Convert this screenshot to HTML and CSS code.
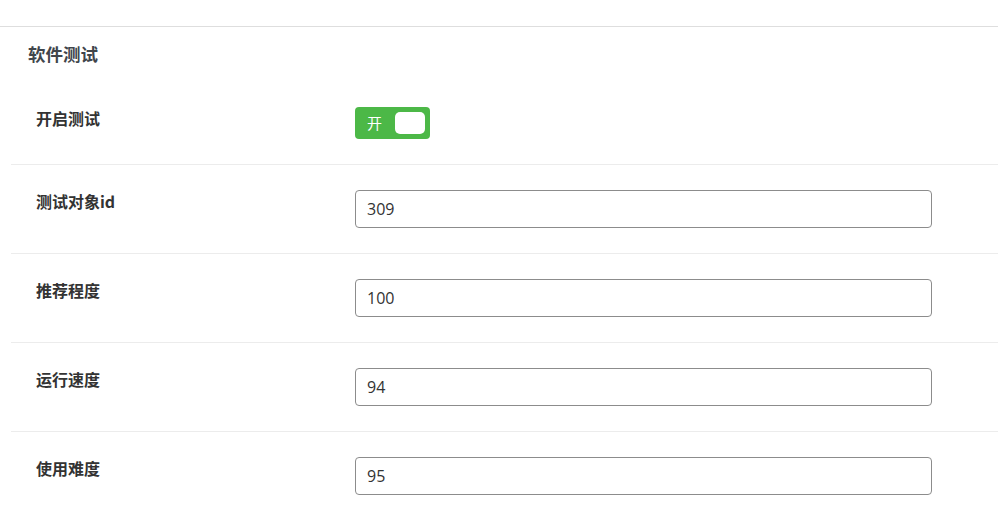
FILE: index.html
```html
<!DOCTYPE html>
<html lang="zh-CN">
<head>
<meta charset="utf-8">
<title>软件测试</title>
<link rel="stylesheet" href="styles.css">
</head>
<body>
<div class="topbar"></div>
<h2 class="section-title">软件测试</h2>
<div class="form">
  <div class="row">
    <div class="label">开启测试</div>
    <div class="control">
      <div class="switch"><span class="switch-text">开</span><span class="knob"></span></div>
    </div>
  </div>
  <div class="row">
    <div class="label">测试对象id</div>
    <div class="control"><input class="input" type="text" value="309"></div>
  </div>
  <div class="row">
    <div class="label">推荐程度</div>
    <div class="control"><input class="input" type="text" value="100"></div>
  </div>
  <div class="row">
    <div class="label">运行速度</div>
    <div class="control"><input class="input" type="text" value="94"></div>
  </div>
  <div class="row last">
    <div class="label">使用难度</div>
    <div class="control"><input class="input" type="text" value="95"></div>
  </div>
</div>
</body>
</html>
```

FILE: styles.css
```css
html, body {
  margin: 0;
  padding: 0;
  background: #fff;
}
body {
  font-family: "Noto Sans CJK SC", "Noto Sans", sans-serif;
  color: #333;
}
.topbar {
  height: 26px;
  border-bottom: 1px solid #dedede;
}
.section-title {
  margin: 0 0 16px 0;
  padding: 14px 0 0 28px;
  font-size: 17.5px;
  line-height: 25px;
  font-weight: 700;
  color: #40454b;
}
.form {
  margin-left: 11px;
}
.row {
  display: flex;
  align-items: flex-start;
  padding: 25px 0 25px 25px;
  border-bottom: 1px solid #ececec;
}
.row.last {
  border-bottom: none;
}
.label {
  width: 319px;
  flex: none;
  padding-top: 1px;
  font-size: 16px;
  line-height: 21px;
  font-weight: 700;
  color: #333;
}
.control {
  flex: none;
}
.switch {
  width: 75px;
  height: 32px;
  box-sizing: border-box;
  background: #4cb847;
  border-radius: 4px;
  display: flex;
  align-items: center;
  justify-content: space-between;
  padding: 0 5px 0 12px;
}
.switch-text {
  color: #fff;
  font-size: 15px;
  line-height: 20px;
}
.knob {
  width: 30px;
  height: 22px;
  background: #fff;
  border-radius: 5px;
}
.input {
  display: block;
  width: 577px;
  height: 38px;
  box-sizing: border-box;
  margin: 0;
  border: 1px solid #8c8c8c;
  border-radius: 4px;
  padding: 0 11px;
  font-family: "Open Sans", "Noto Sans", sans-serif;
  font-size: 16px;
  color: #333;
  background: #fff;
  outline: none;
}
```
